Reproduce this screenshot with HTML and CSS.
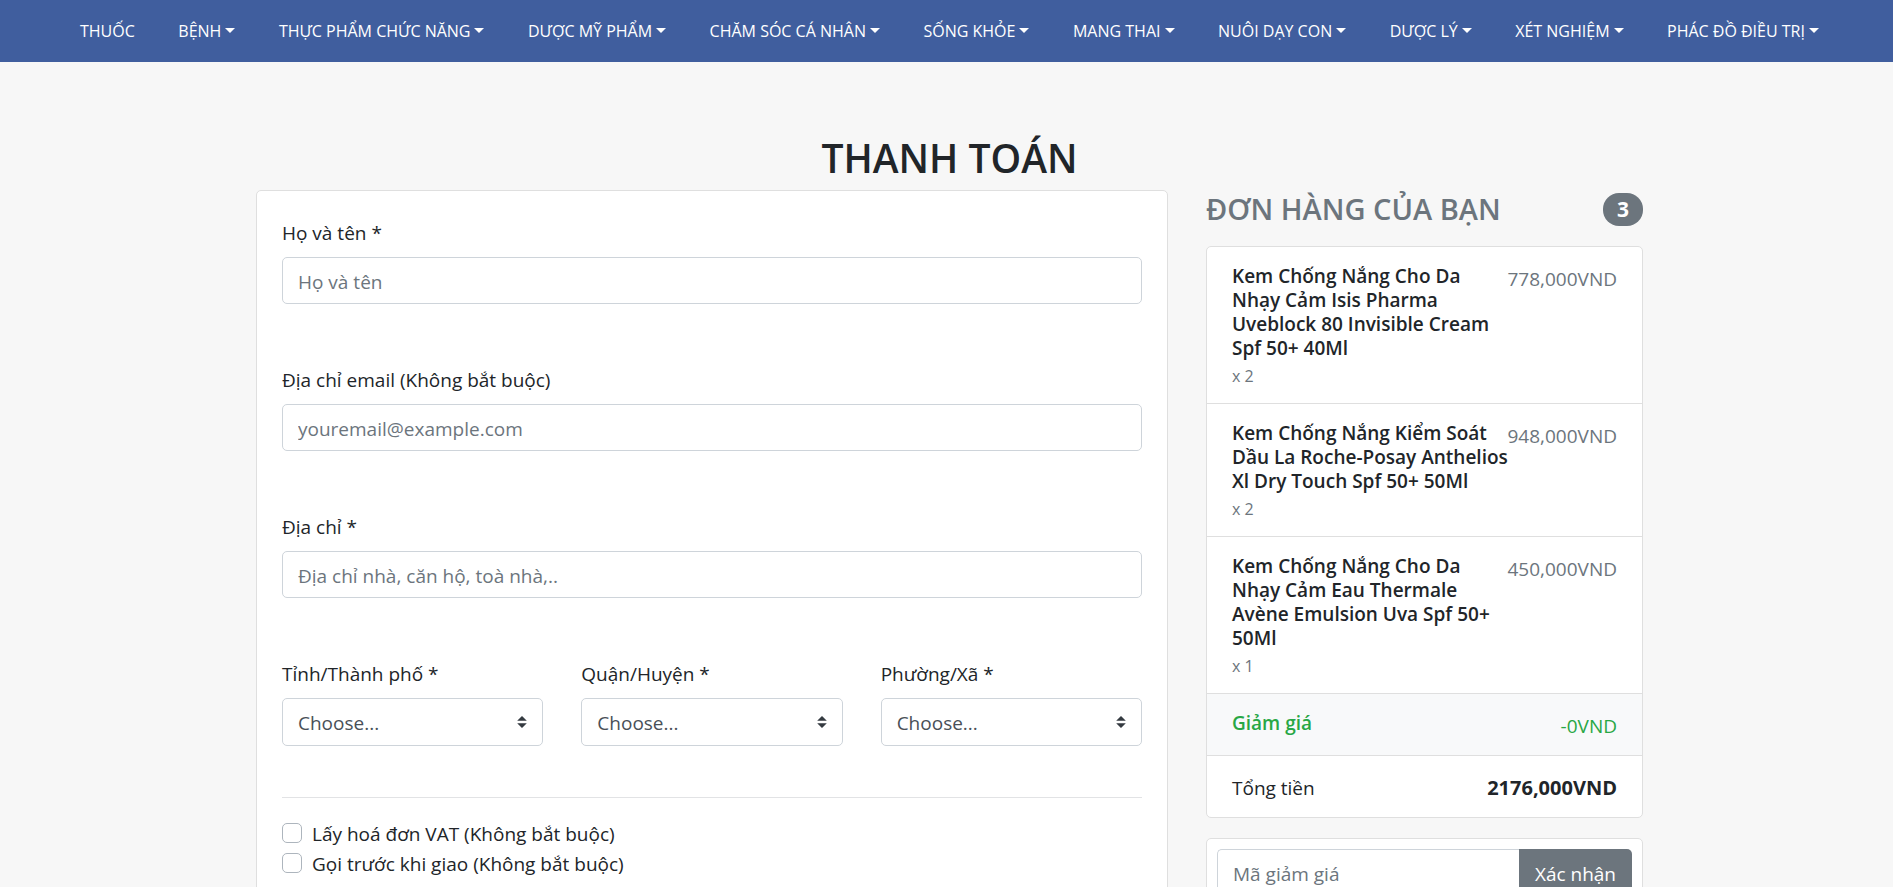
FILE: index.html
```html
<!DOCTYPE html>
<html lang="vi">
<head>
<meta charset="utf-8">
<meta name="viewport" content="width=device-width, initial-scale=1">
<title>Thanh toán</title>
<link rel="stylesheet" href="styles.css">
</head>
<body>
<nav class="navbar">
  <a class="nav-link" href="#">THUỐC</a>
  <a class="nav-link dropdown" href="#">BỆNH</a>
  <a class="nav-link dropdown" href="#">THỰC PHẨM CHỨC NĂNG</a>
  <a class="nav-link dropdown" href="#">DƯỢC MỸ PHẨM</a>
  <a class="nav-link dropdown" href="#">CHĂM SÓC CÁ NHÂN</a>
  <a class="nav-link dropdown" href="#">SỐNG KHỎE</a>
  <a class="nav-link dropdown" href="#">MANG THAI</a>
  <a class="nav-link dropdown" href="#">NUÔI DẠY CON</a>
  <a class="nav-link dropdown" href="#">DƯỢC LÝ</a>
  <a class="nav-link dropdown" href="#">XÉT NGHIỆM</a>
  <a class="nav-link dropdown" href="#">PHÁC ĐỒ ĐIỀU TRỊ</a>
</nav>
<main class="container">
  <h1 class="page-title">THANH TOÁN</h1>
  <div class="checkout">
    <form class="card billing">
      <div class="field">
        <label for="name">Họ và tên *</label>
        <input class="control" id="name" type="text" placeholder="Họ và tên">
      </div>
      <div class="field">
        <label for="email">Địa chỉ email (Không bắt buộc)</label>
        <input class="control" id="email" type="email" placeholder="youremail@example.com">
      </div>
      <div class="field">
        <label for="address">Địa chỉ *</label>
        <input class="control" id="address" type="text" placeholder="Địa chỉ nhà, căn hộ, toà nhà,..">
      </div>
      <div class="field-row">
        <div class="field">
          <label for="city">Tỉnh/Thành phố *</label>
          <div class="select-wrap">
            <select class="control" id="city"><option>Choose...</option></select>
            <svg class="select-arrows" viewBox="0 0 4 5" aria-hidden="true"><path d="M2 0 0 2h4zM2 5 0 3h4z"/></svg>
          </div>
        </div>
        <div class="field">
          <label for="district">Quận/Huyện *</label>
          <div class="select-wrap">
            <select class="control" id="district"><option>Choose...</option></select>
            <svg class="select-arrows" viewBox="0 0 4 5" aria-hidden="true"><path d="M2 0 0 2h4zM2 5 0 3h4z"/></svg>
          </div>
        </div>
        <div class="field">
          <label for="ward">Phường/Xã *</label>
          <div class="select-wrap">
            <select class="control" id="ward"><option>Choose...</option></select>
            <svg class="select-arrows" viewBox="0 0 4 5" aria-hidden="true"><path d="M2 0 0 2h4zM2 5 0 3h4z"/></svg>
          </div>
        </div>
      </div>
      <hr class="divider">
      <div class="check">
        <input type="checkbox" id="vat">
        <label for="vat">Lấy hoá đơn VAT (Không bắt buộc)</label>
      </div>
      <div class="check">
        <input type="checkbox" id="call">
        <label for="call">Gọi trước khi giao (Không bắt buộc)</label>
      </div>
    </form>
    <aside class="summary">
      <h2 class="summary-title">ĐƠN HÀNG CỦA BẠN <span class="badge">3</span></h2>
      <ul class="card order">
        <li class="order-item">
          <div class="item-info">
            <h3 class="item-name">Kem Chống Nắng Cho Da<br>Nhạy Cảm Isis Pharma<br>Uveblock 80 Invisible Cream<br>Spf 50+ 40Ml</h3>
            <small class="quantity">x 2</small>
          </div>
          <span class="price">778,000VND</span>
        </li>
        <li class="order-item">
          <div class="item-info">
            <h3 class="item-name">Kem Chống Nắng Kiểm Soát<br>Dầu La Roche-Posay Anthelios<br>Xl Dry Touch Spf 50+ 50Ml</h3>
            <small class="quantity">x 2</small>
          </div>
          <span class="price">948,000VND</span>
        </li>
        <li class="order-item">
          <div class="item-info">
            <h3 class="item-name">Kem Chống Nắng Cho Da<br>Nhạy Cảm Eau Thermale<br>Avène Emulsion Uva Spf 50+<br>50Ml</h3>
            <small class="quantity">x 1</small>
          </div>
          <span class="price">450,000VND</span>
        </li>
        <li class="order-item discount">
          <h3 class="item-name">Giảm giá</h3>
          <span class="price">-0VND</span>
        </li>
        <li class="order-item">
          <span>Tổng tiền</span>
          <strong class="total">2176,000VND</strong>
        </li>
      </ul>
      <form class="card coupon">
        <input class="control" type="text" placeholder="Mã giảm giá" aria-label="Mã giảm giá">
        <button class="redeem" type="button">Xác nhận</button>
      </form>
    </aside>
  </div>
</main>
</body>
</html>
```
FILE: styles.css
```css
* {
  box-sizing: border-box;
}

body {
  margin: 0;
  background: #f7f7f7;
  color: #212529;
  font: 19px/30px "Open Sans", "Noto Sans", sans-serif;
}

h1,
h2,
h3,
ul {
  margin: 0;
  padding: 0;
}

.navbar {
  display: flex;
  justify-content: space-between;
  align-items: center;
  padding: 16px 74px 16px 80px;
  background: #405e9e;
}

.nav-link {
  color: #fff;
  font-size: 16px;
  text-decoration: none;
  white-space: nowrap;
}

.dropdown::after {
  content: "";
  display: inline-block;
  margin-left: 4px;
  border: 5px solid transparent;
  border-top-color: #fff;
  border-bottom: 0;
  vertical-align: 4px;
}

.container {
  max-width: 1393px;
  margin: 0 auto;
  padding: 72px 0 0 6px;
}

.page-title {
  margin-bottom: 8px;
  font-size: 39px;
  font-weight: 600;
  line-height: 48px;
  text-align: center;
}

.checkout {
  display: grid;
  grid-template-columns: minmax(0, 912fr) minmax(0, 437fr);
  gap: 38px;
}

.card {
  background: #fff;
  border: 1px solid #dfdfdf;
  border-radius: 5px;
}

.billing {
  padding: 26px 25px 40px;
}

.field {
  display: flex;
  flex-direction: column;
  gap: 10px;
  margin-bottom: 60px;
  padding-top: 2px;
  line-height: 28px;
}

.field-row {
  display: grid;
  grid-template-columns: repeat(3, minmax(0, 1fr));
  gap: 38px;
}

.field-row .field {
  margin-bottom: 51px;
}

.control {
  width: 100%;
  height: 47px;
  padding: 2px 15px 0;
  border: 1px solid #ced4da;
  border-radius: 5px;
  background: #fff;
  color: #495057;
  font: inherit;
}

.control::placeholder {
  color: #6c757d;
  opacity: 1;
}

.select-wrap {
  display: grid;
  align-items: center;
}

.select-wrap > * {
  grid-area: 1 / 1;
}

.select-wrap .control {
  height: 48px;
  appearance: none;
}

.select-arrows {
  justify-self: end;
  width: 10px;
  height: 12px;
  margin-right: 16px;
  fill: #343a40;
  pointer-events: none;
}

.divider {
  margin: 0 0 20px;
  border: 0;
  border-top: 1px solid #e2e3e5;
}

.check {
  display: flex;
  gap: 10px;
}

.check input {
  appearance: none;
  flex: none;
  width: 20px;
  height: 20px;
  margin: 5px 0 0;
  border: 1px solid #adb5bd;
  border-radius: 5px;
  background: #fff;
}

.check label {
  padding-top: 2px;
  line-height: 28px;
}

.summary-title {
  display: flex;
  justify-content: space-between;
  align-items: center;
  margin-bottom: 18px;
  color: #6c757d;
  font-size: 29px;
  font-weight: 600;
  line-height: 38px;
}

.badge {
  padding: 0 14px;
  border-radius: 16px;
  background: #6c757d;
  color: #fff;
  font-size: 21px;
  font-weight: 700;
  line-height: 33px;
}

.order {
  margin-bottom: 20px;
  list-style: none;
}

.order-item {
  display: flex;
  justify-content: space-between;
  padding: 17px 25px 14px;
}

.order-item + .order-item {
  border-top: 1px solid #dfdfdf;
}

.item-info {
  min-width: 0;
}

.item-name {
  font-size: 19px;
  font-weight: 600;
  line-height: 24px;
  white-space: nowrap;
}

.quantity {
  display: block;
  padding-top: 3px;
  color: #6c757d;
  font-size: 16px;
  line-height: 26px;
}

.price {
  color: #6c757d;
  line-height: 30px;
}

.total {
  font-size: 20px;
}

.discount {
  background: #f8f9fa;
}

.discount .item-name,
.discount .price {
  color: #28a745;
}

.coupon {
  display: flex;
  padding: 10px;
}

.coupon .control {
  flex: 1;
  min-width: 0;
  border-right: 0;
  border-radius: 5px 0 0 5px;
}

.redeem {
  padding: 2px 16px 0;
  border: 0;
  border-radius: 0 5px 5px 0;
  background: #6c757d;
  color: #fff;
  font: inherit;
}
```
